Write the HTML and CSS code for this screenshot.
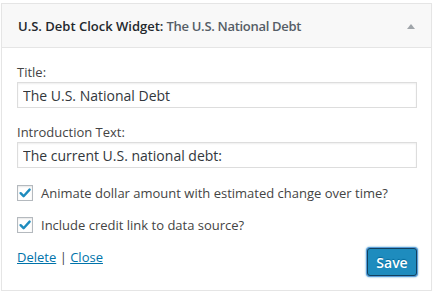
FILE: index.html
```html
<!DOCTYPE html>
<html>
<head>
<meta charset="utf-8">
<link rel="stylesheet" href="styles.css">
</head>
<body>
<div class="widget">
  <div class="widget-top">
    <h3 class="widget-title">U.S. Debt Clock Widget:<span class="in-title"> The U.S. National Debt</span></h3>
    <span class="toggle"></span>
  </div>
  <div class="widget-inside">
    <p class="field">
      <label class="lbl">Title:</label>
      <input class="text" type="text" value="The U.S. National Debt">
    </p>
    <p class="field field-last">
      <label class="lbl">Introduction Text:</label>
      <input class="text" type="text" value="The current U.S. national debt:">
    </p>
    <p class="check-row">
      <span class="checkbox"><svg width="14" height="14" viewBox="0 0 14 14"><path d="M2.6 7.2 L5.6 10.2 L11.6 3.6" fill="none" stroke="#1e8cbe" stroke-width="2.4" stroke-linecap="round" stroke-linejoin="round"/></svg></span>
      <span class="check-text">Animate dollar amount with estimated change over time?</span>
    </p>
    <p class="check-row">
      <span class="checkbox"><svg width="14" height="14" viewBox="0 0 14 14"><path d="M2.6 7.2 L5.6 10.2 L11.6 3.6" fill="none" stroke="#1e8cbe" stroke-width="2.4" stroke-linecap="round" stroke-linejoin="round"/></svg></span>
      <span class="check-text">Include credit link to data source?</span>
    </p>
    <div class="controls">
      <div class="links"><a href="#">Delete</a> | <a href="#">Close</a></div>
      <button class="save">Save</button>
    </div>
  </div>
</div>
</body>
</html>
```
FILE: styles.css
```css
html, body {
  margin: 0;
  padding: 0;
  background: #ffffff;
}
body {
  font-family: "Open Sans", "Liberation Sans", sans-serif;
  color: #444444;
}
.widget {
  margin: 3px 0 0 1px;
  width: 429px;
  border: 1px solid #e5e5e5;
  background: #ffffff;
  box-shadow: 0 1px 1px rgba(0,0,0,0.04);
}
.widget-top {
  height: 43px;
  background: #f8f8f8;
  border-bottom: 1px solid #e5e5e5;
  display: flex;
  align-items: center;
  justify-content: space-between;
  padding: 0 16px 0 16px;
}
.widget-title {
  margin: 0;
  font-size: 13px;
  font-weight: 600;
  color: #23282d;
  line-height: 20px;
}
.in-title {
  color: #555d66;
  font-weight: 600;
  letter-spacing: -0.3px;
}
.toggle {
  width: 0;
  height: 0;
  border-left: 4px solid transparent;
  border-right: 4px solid transparent;
  border-bottom: 5px solid #a0a5aa;
  margin-top: 1px;
}
.widget-inside {
  padding: 15px 14px 14px 15px;
}
.field {
  margin: 0 0 15px 0;
}
.field-last {
  margin-bottom: 17px;
}
.lbl {
  display: block;
  font-size: 13px;
  line-height: 18px;
  color: #444444;
  margin-bottom: 1px;
}
.text {
  display: block;
  box-sizing: border-box;
  width: 400px;
  height: 26px;
  margin: 0;
  padding: 0 5px;
  border: 1px solid #dddddd;
  box-shadow: inset 0 1px 2px rgba(0,0,0,0.07);
  font-family: "Open Sans", "Liberation Sans", sans-serif;
  font-size: 14px;
  color: #32373c;
  background: #ffffff;
  outline: none;
}
.check-row {
  display: flex;
  align-items: center;
  margin: 0 0 16px 0;
  height: 16px;
}
.checkbox {
  box-sizing: border-box;
  width: 16px;
  height: 16px;
  border: 1px solid #b4b9be;
  background: #ffffff;
  box-shadow: inset 0 1px 2px rgba(0,0,0,0.1);
  display: flex;
  align-items: center;
  justify-content: center;
  margin-right: 8px;
}
.checkbox svg {
  display: block;
}
.check-text {
  font-size: 13px;
  color: #444444;
}
.controls {
  display: flex;
  justify-content: space-between;
  align-items: flex-start;
  margin-top: -2px;
}
.links {
  font-size: 13px;
  line-height: 20px;
  color: #444444;
}
.links a {
  color: #0073aa;
  text-decoration: underline;
}
.save {
  margin-top: 1px;
  box-sizing: border-box;
  width: 50px;
  height: 28px;
  padding: 0;
  background: #1e8cbe;
  border: 1px solid #11405e;
  border-radius: 3px;
  box-shadow: 0 0 0 1px #5b9dd9, 0 0 2px 1px rgba(30,140,190,0.8);
  color: #ffffff;
  font-family: "Open Sans", "Liberation Sans", sans-serif;
  font-size: 14px;
  font-weight: 600;
  text-shadow: 0 -1px 1px #006799;
}
```
